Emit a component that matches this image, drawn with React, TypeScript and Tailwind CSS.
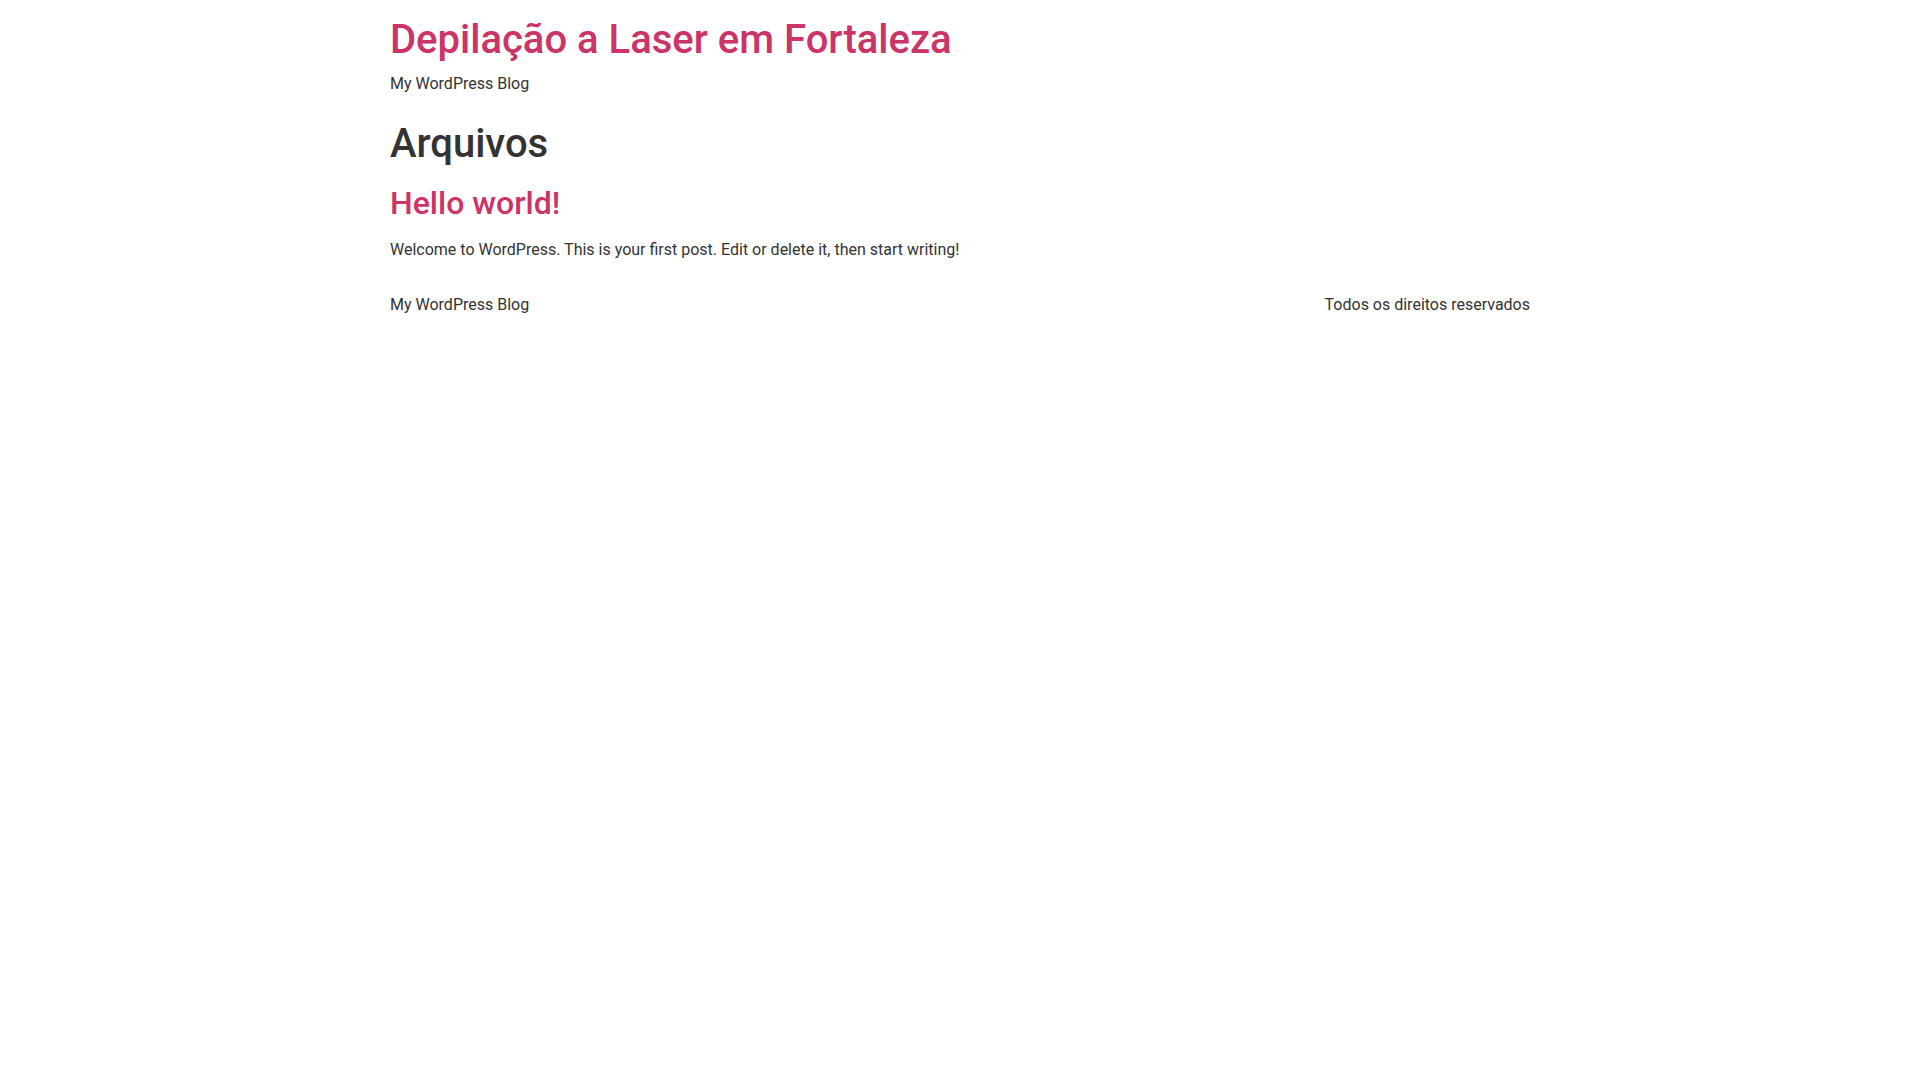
export default function App() {
  return (
    <div className="min-h-screen bg-white font-['Roboto',sans-serif] text-base leading-6 text-[#333333]">
      <div className="mx-auto w-full max-w-[1140px]">
        <header className="pt-4">
          <h1 className="mb-2 text-[40px] font-medium leading-[1.2] text-[#cc3366]">
            <a href="#">Depilação a Laser em Fortaleza</a>
          </h1>
          <p>My WordPress Blog</p>
        </header>

        <main>
          <h1 className="mt-6 text-[40px] font-medium leading-[1.2]">Arquivos</h1>
          <article>
            <h2 className="mt-4 text-[32px] font-medium leading-[1.2] text-[#cc3366]">
              <a href="#">Hello world!</a>
            </h2>
            <p className="mt-4">
              Welcome to WordPress. This is your first post. Edit or delete it, then start writing!
            </p>
          </article>
        </main>

        <footer className="mt-[31px] flex items-center justify-between">
          <p>My WordPress Blog</p>
          <p>Todos os direitos reservados</p>
        </footer>
      </div>
    </div>
  );
}
